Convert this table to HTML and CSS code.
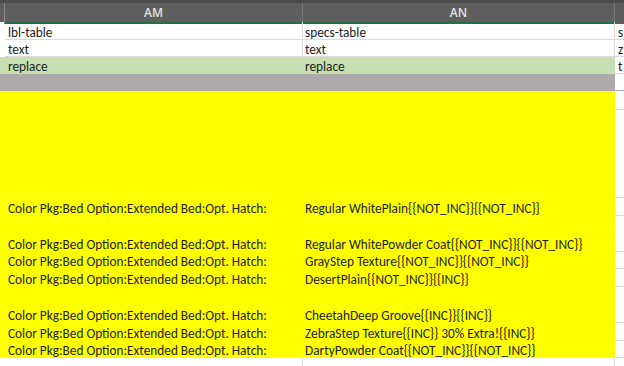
FILE: index.html
```html
<!DOCTYPE html>
<html>
<head>
<meta charset="utf-8">
<link rel="stylesheet" href="styles.css">
</head>
<body>
<div class="sheet">
  <div class="row head">
    <div class="c stub"></div>
    <div class="c hd sel">AM</div>
    <div class="c hd sel">AN</div>
    <div class="c hd ao"></div>
  </div>
  <div class="row r18">
    <div class="c stub"></div>
    <div class="c am">lbl-table</div>
    <div class="c an">specs-table</div>
    <div class="c ao">s</div>
  </div>
  <div class="row r17">
    <div class="c stub"></div>
    <div class="c am">text</div>
    <div class="c an">text</div>
    <div class="c ao">z</div>
  </div>
  <div class="row r17 green">
    <div class="c stub"></div>
    <div class="c am">replace</div>
    <div class="c an">replace</div>
    <div class="c ao">t</div>
  </div>
  <div class="row r17 gray">
    <div class="c stub"></div>
    <div class="c am"></div>
    <div class="c an"></div>
    <div class="c ao"></div>
  </div>
  <div class="row y r19"><div class="c stub"></div><div class="c am"></div><div class="c an"></div><div class="c ao"></div></div>
  <div class="row y r88"><div class="c stub"></div><div class="c am"></div><div class="c an"></div><div class="c ao"></div></div>
  <div class="row y r18"><div class="c stub"></div><div class="c am">Color Pkg:Bed Option:Extended Bed:Opt. Hatch:</div><div class="c an">Regular WhitePlain{{NOT_INC}}{{NOT_INC}}</div><div class="c ao"></div></div>
  <div class="row y r36"><div class="c stub"></div><div class="c am">Color Pkg:Bed Option:Extended Bed:Opt. Hatch:</div><div class="c an">Regular WhitePowder Coat{{NOT_INC}}{{NOT_INC}}</div><div class="c ao"></div></div>
  <div class="row y r17"><div class="c stub"></div><div class="c am">Color Pkg:Bed Option:Extended Bed:Opt. Hatch:</div><div class="c an">GrayStep Texture{{NOT_INC}}{{NOT_INC}}</div><div class="c ao"></div></div>
  <div class="row y r18"><div class="c stub"></div><div class="c am">Color Pkg:Bed Option:Extended Bed:Opt. Hatch:</div><div class="c an">DesertPlain{{NOT_INC}}{{INC}}</div><div class="c ao"></div></div>
  <div class="row y r36"><div class="c stub"></div><div class="c am">Color Pkg:Bed Option:Extended Bed:Opt. Hatch:</div><div class="c an">CheetahDeep Groove{{INC}}{{INC}}</div><div class="c ao"></div></div>
  <div class="row y r18"><div class="c stub"></div><div class="c am">Color Pkg:Bed Option:Extended Bed:Opt. Hatch:</div><div class="c an">ZebraStep Texture{{INC}} 30% Extra!{{INC}}</div><div class="c ao"></div></div>
  <div class="row y r17"><div class="c stub"></div><div class="c am">Color Pkg:Bed Option:Extended Bed:Opt. Hatch:</div><div class="c an">DartyPowder Coat{{NOT_INC}}{{NOT_INC}}</div><div class="c ao"></div></div>
  <div class="row r17"><div class="c stub"></div><div class="c am"></div><div class="c an"></div><div class="c ao"></div></div>
</div>
</body>
</html>
```
FILE: styles.css
```css
html, body {
  margin: 0;
  padding: 0;
  background: #ffffff;
}
.sheet {
  width: 624px;
  height: 366px;
  overflow: hidden;
  font-family: Carlito, "Liberation Sans", Arial, sans-serif;
  font-size: 13.3px;
  color: #1c1c1c;
}
.row {
  display: grid;
  grid-template-columns: 5px 298px 312px 1fr;
}
.c {
  box-sizing: border-box;
  display: flex;
  align-items: flex-end;
  padding-bottom: 0;
  line-height: 12px;
  white-space: nowrap;
  border-bottom: 1px solid #dadada;
}
.am { padding-left: 3px; border-right: 1px solid #dadada; }
.an { padding-left: 2px; border-right: 1px solid #dadada; }
.ao { padding-left: 3px; }
.head {
  height: 22px;
  background: #5e5e5e;
  border-top: 3px solid #4c4c4c;
  box-sizing: border-box;
}
.head .c {
  align-items: center;
  justify-content: center;
  padding: 0;
  border-bottom: none;
  border-right: 1px solid #7a7a7a;
  color: #e2e2e2;
  font-family: "Open Sans", "Liberation Sans", sans-serif;
  font-size: 12px;
  font-weight: 600;
  line-height: 19px;
}
.head .sel { border-bottom: 2px solid #1f7145; }
.head .ao { border-right: none; background: #5a5a5a; }
.head .stub { border-right: 1px solid #8a8a8a; }
.r17 { height: 17px; }
.r18 { height: 18px; }
.r19 { height: 19px; }
.r36 { height: 36px; }
.r88 { height: 88px; }
.green .am, .green .an, .green .stub { background: #c6e0b4; border-bottom-color: #c6e0b4; border-right-color: #c6e0b4; }
.gray .am, .gray .an, .gray .stub { background: #aeaaab; border-bottom-color: #aeaaab; border-right-color: #aeaaab; }
.gray .ao { border-bottom-color: #aeaaab; }
.y .stub, .y .am, .y .an { background: #ffff00; border-bottom-color: #ffff00; border-right-color: #ffff00; }
.stub { border-bottom-color: transparent; }
```
